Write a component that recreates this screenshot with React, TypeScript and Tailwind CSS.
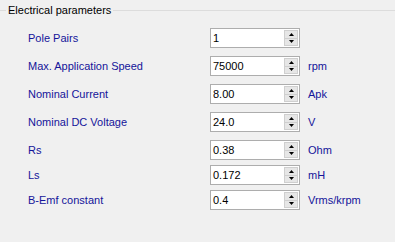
import React from "react";

const rows: { label: string; value: string; unit: string; mt: string }[] = [
  { label: "Pole Pairs", value: "1", unit: "", mt: "mt-0" },
  { label: "Max. Application Speed", value: "75000", unit: "rpm", mt: "mt-[8px]" },
  { label: "Nominal Current", value: "8.00", unit: "Apk", mt: "mt-[8px]" },
  { label: "Nominal DC Voltage", value: "24.0", unit: "V", mt: "mt-[8px]" },
  { label: "Rs", value: "0.38", unit: "Ohm", mt: "mt-[8px]" },
  { label: "Ls", value: "0.172", unit: "mH", mt: "mt-[5px]" },
  { label: "B-Emf constant", value: "0.4", unit: "Vrms/krpm", mt: "mt-[5px]" },
];

function Spinner() {
  return (
    <div className="flex flex-col w-[15px] h-[18px] py-px pr-px">
      <div className="flex-1 flex items-center justify-center bg-[#e6e6e6] border border-[#cfcfcf]">
        <svg width="5" height="3" viewBox="0 0 5 3"><path d="M2.5 0 L5 3 L0 3 Z" fill="#000" /></svg>
      </div>
      <div className="flex-1 flex items-center justify-center bg-[#e6e6e6] border border-t-0 border-[#cfcfcf]">
        <svg width="5" height="3" viewBox="0 0 5 3"><path d="M0 0 L5 0 L2.5 3 Z" fill="#000" /></svg>
      </div>
    </div>
  );
}

export default function App() {
  return (
    <div
      className="w-[395px] h-[242px] bg-[#f0f0f0] text-[11px] leading-none overflow-hidden"
      style={{ fontFamily: '"Liberation Sans", Arial, sans-serif' }}
    >
      <div className="flex items-center h-[20px]">
        <div className="w-[6px] h-px bg-[#dcdcdc]" />
        <span className="px-[2px] text-black">Electrical parameters</span>
        <div className="flex-1 h-px bg-[#dcdcdc]" />
      </div>
      <div className="flex flex-col pt-[8px]">
        {rows.map((r) => (
          <div key={r.label} className={`flex items-center h-[20px] ${r.mt}`}>
            <div className="w-[210px] pl-[28px] text-[#14149a]">{r.label}</div>
            <div className="w-[90px] h-[20px] flex items-center bg-white border border-[#adadad]">
              <div className="flex-1 pl-[2px] text-black">{r.value}</div>
              <Spinner />
            </div>
            <div className="pl-[8px] text-[#14149a]">{r.unit}</div>
          </div>
        ))}
      </div>
    </div>
  );
}
